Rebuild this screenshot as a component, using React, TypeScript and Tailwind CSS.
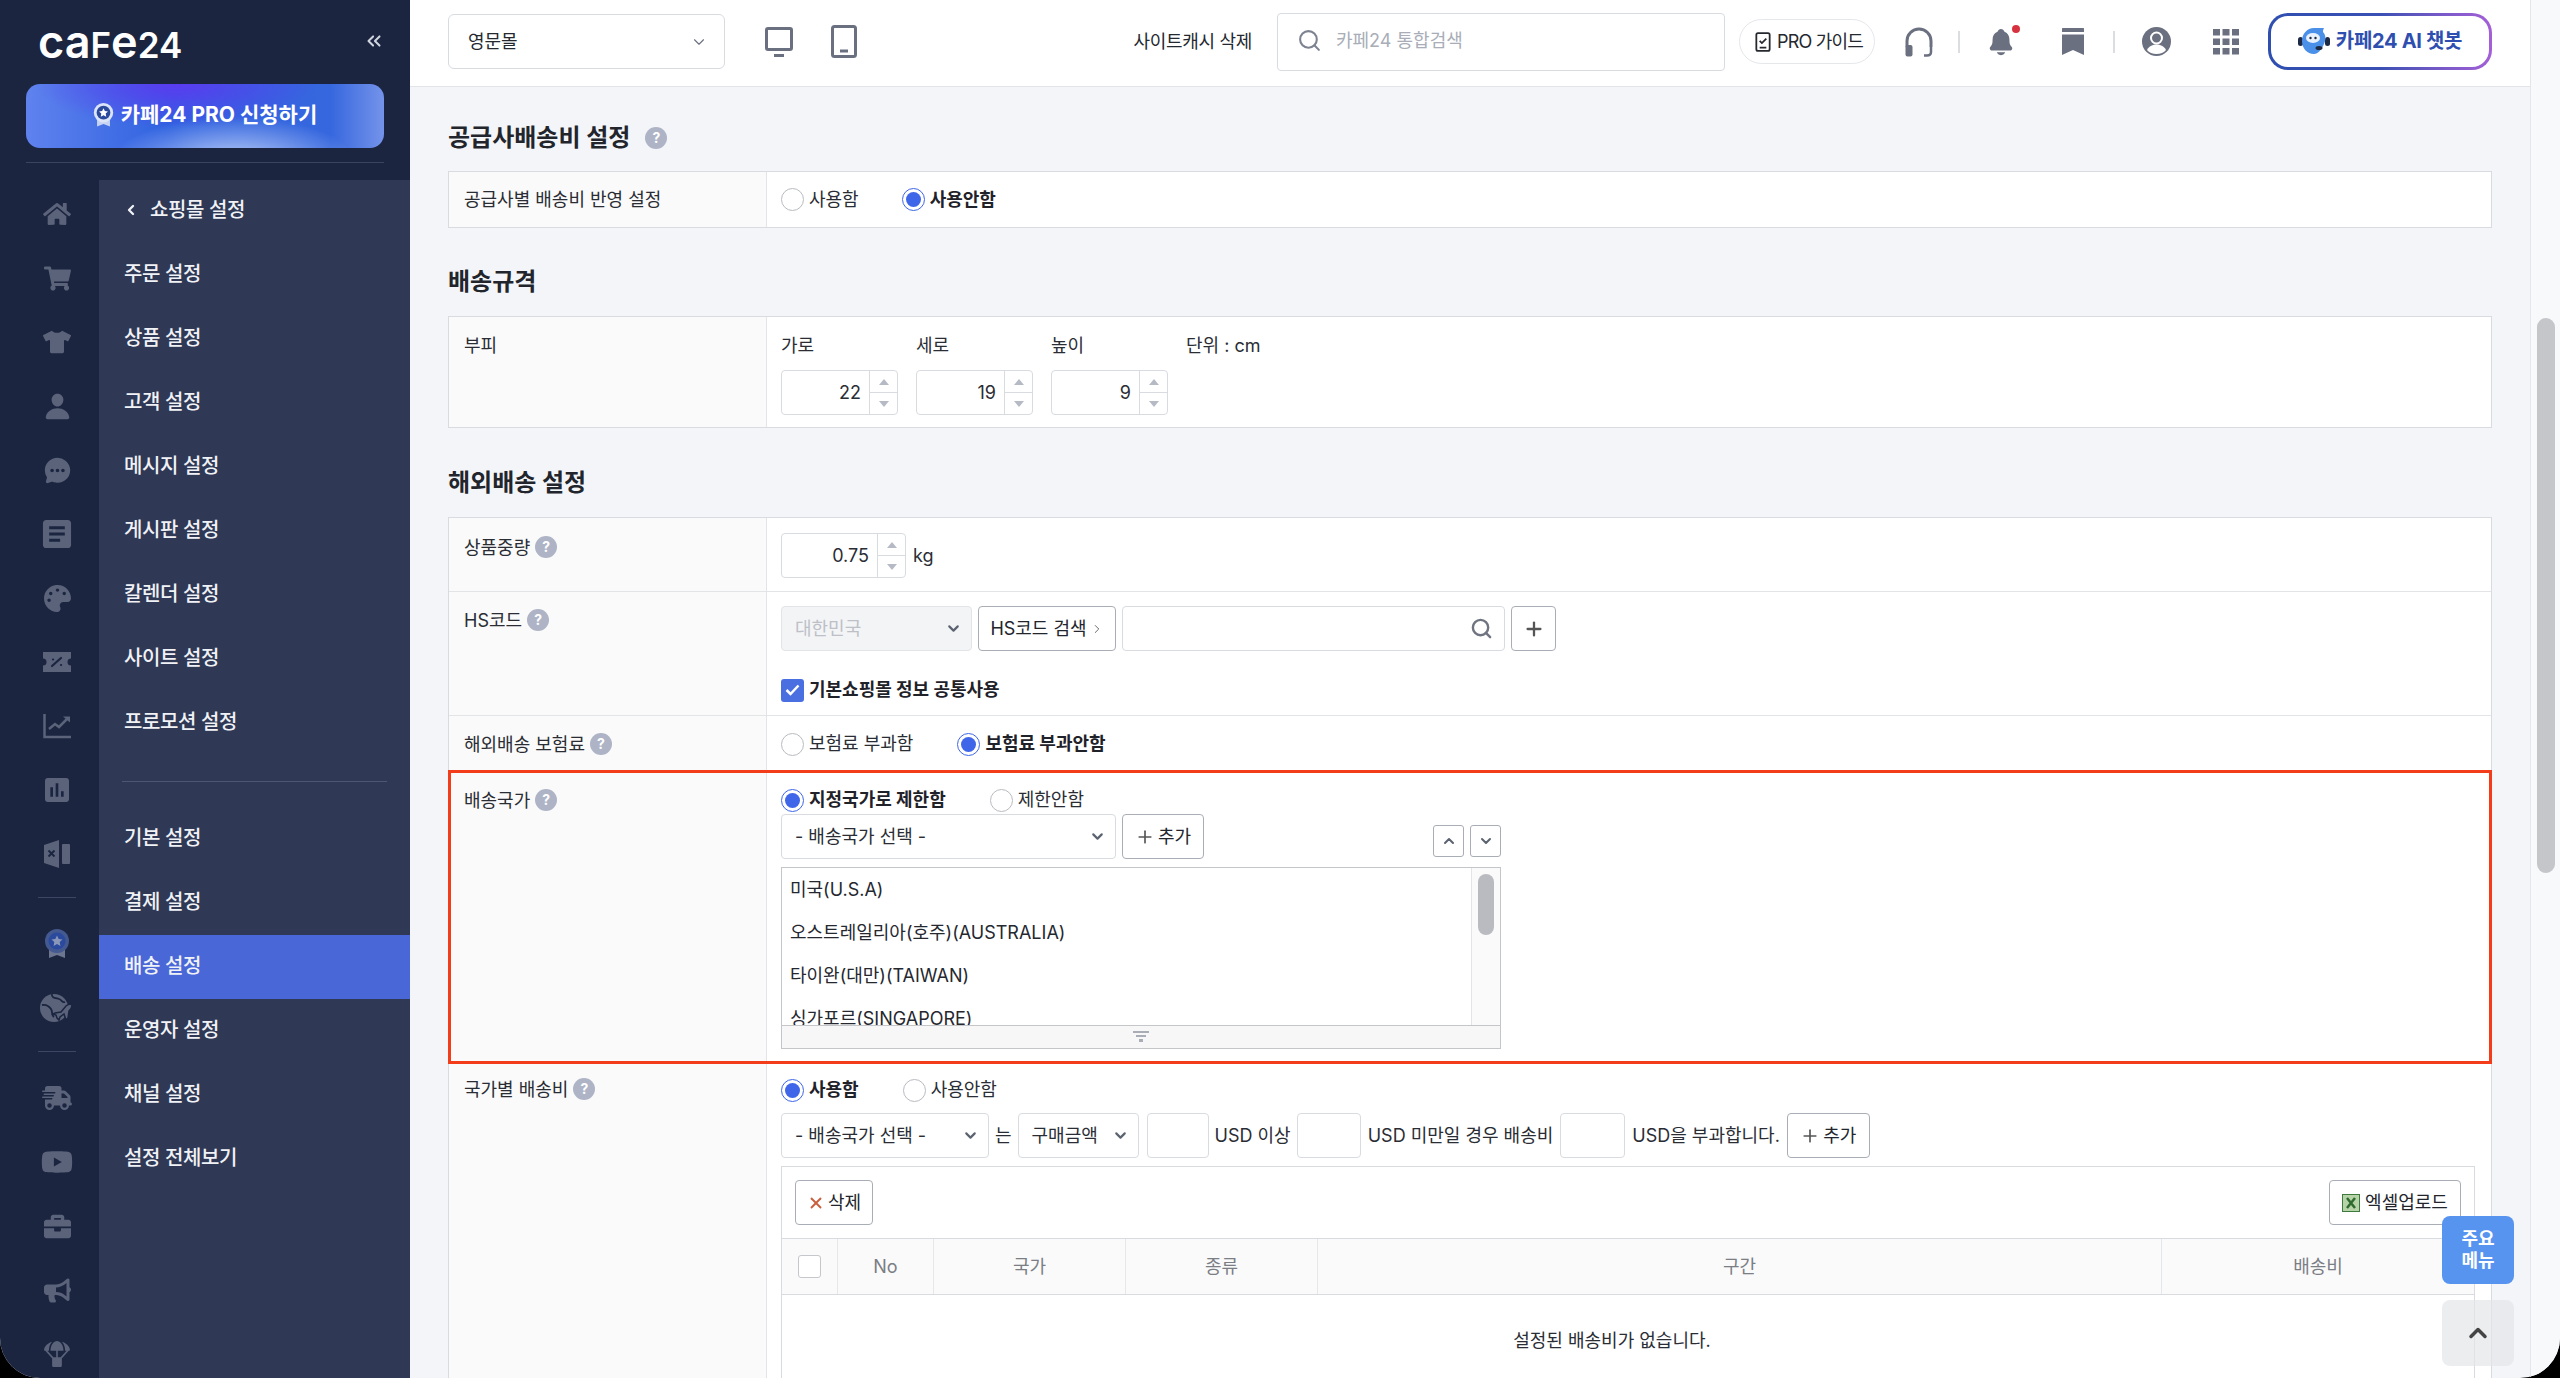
import { ChevronDown, ChevronLeft, ChevronRight, ChevronUp, ChevronsLeft, Plus, Search, X } from 'lucide-react';
import { FaHome, FaShoppingCart, FaTshirt, FaPalette, FaBriefcase, FaBullhorn, FaParachuteBox } from 'react-icons/fa';
import { FaTruckFast, FaYoutube } from 'react-icons/fa6';
import { IoChatbubbleEllipses, IoNotifications, IoPerson } from 'react-icons/io5';
import { MdArticle, MdInsertChart } from 'react-icons/md';
import type { ReactNode } from 'react';

const menuTop = ['주문 설정', '상품 설정', '고객 설정', '메시지 설정', '게시판 설정', '칼렌더 설정', '사이트 설정', '프로모션 설정'];
const menuBottom = ['기본 설정', '결제 설정', '배송 설정', '운영자 설정', '채널 설정', '설정 전체보기'];
const countries = ['미국(U.S.A)', '오스트레일리아(호주)(AUSTRALIA)', '타이완(대만)(TAIWAN)', '싱가포르(SINGAPORE)'];

function Coupon() {
  return (
    <svg width="28" height="20" viewBox="0 0 28 20" fill="currentColor">
      <path d="M0 0h28v6.500a3.500 3.500 0 0 0 0 7V20H0v-6.500a3.500 3.500 0 0 0 0-7z" />
      <path d="M9 14l9-8M10 7.500h.1M18 13h.1" stroke="#1b2540" strokeWidth="2.200" strokeLinecap="round" />
    </svg>
  );
}

function LineChart() {
  return (
    <svg width="28" height="26" viewBox="0 0 28 26" fill="none" stroke="currentColor" strokeWidth="2.500">
      <path d="M1.500 1v23H28" />
      <path d="M6 16l6-5 4 3 8-8" />
      <path d="M20 3.500h7v6z" fill="currentColor" stroke="none" />
    </svg>
  );
}

function BookX() {
  return (
    <svg width="26" height="28" viewBox="0 0 26 28" fill="currentColor">
      <path d="M0 5l15-5v28L0 23z" />
      <rect x="18" y="4" width="8" height="20" rx="1" />
      <path d="M4.500 10.500l6 6M10.500 10.500l-6 6" stroke="#1b2540" strokeWidth="1.800" />
    </svg>
  );
}

function Medal({ ring, star, ribbon, size = 26 }: { ring: string; star: string; ribbon: string; size?: number }) {
  return (
    <svg width={size} height={(size * 30) / 26} viewBox="0 0 26 30">
      <path d="M5 18v11l8-3 8 3V18z" fill={ribbon} />
      <circle cx="13" cy="12" r="12" fill={ring} />
      <circle cx="13" cy="12" r="8.500" fill="#2b4a9e" />
      <path d="M13 6.500l1.700 3.500 3.800.5-2.800 2.600.7 3.800-3.400-1.800-3.400 1.800.7-3.800-2.800-2.600 3.800-.5z" fill={star} />
    </svg>
  );
}

function GlobePlane() {
  return (
    <svg width="34" height="30" viewBox="0 0 34 30" fill="currentColor">
      <circle cx="14" cy="15" r="14" />
      <path d="M2 12c5-1 7 1 9 4s0 6 3 8M12 1c-1 4 4 4 7 5s3 4 6 3" fill="none" stroke="#1b2540" strokeWidth="1.800" />
      <path d="M15 20l6-1 5-6c2-2 6-2 6-1s-1 4-3 6l-1 7-2 2-2-6-4 3-1 3-2-2-1-3-3-1z" stroke="#1b2540" strokeWidth="1.500" />
    </svg>
  );
}

const railGroupOne = [
  <FaHome key="home" size={28} />,
  <FaShoppingCart key="cart" size={27} />,
  <FaTshirt key="shirt" size={28} />,
  <IoPerson key="person" size={29} />,
  <IoChatbubbleEllipses key="chat" size={29} />,
  <MdArticle key="board" size={30} className="scale-125" />,
  <FaPalette key="palette" size={27} />,
  <Coupon key="coupon" />,
  <LineChart key="chart" />,
  <MdInsertChart key="bar" size={32} />,
  <BookX key="book" />,
];

function RailIcon({ children }: { children: ReactNode }) {
  return <div className="h-[64px] flex items-center justify-center text-[#5a6379]">{children}</div>;
}

function Logo() {
  return (
    <span className="font-['Inter',sans-serif] font-semibold leading-none text-white whitespace-nowrap">
      <span className="text-[45px]">ca</span>
      <span className="text-[35px] uppercase">f</span>
      <span className="text-[45px]">e</span>
      <span className="text-[35px]">24</span>
    </span>
  );
}

function Sidebar() {
  return (
    <aside className="w-[410px] shrink-0 h-full bg-[#1b2540] flex flex-col overflow-hidden">
      <div className="h-[84px] shrink-0 flex items-center justify-between pl-[38px] pr-[25px] pb-[2px]">
        <Logo />
        <ChevronsLeft size={22} className="text-[#d0d4de]" strokeWidth={2.200} />
      </div>
      <div className="mx-[26px] h-[64px] shrink-0 rounded-[14px] flex items-center justify-center gap-[7px] pb-[2px] bg-[radial-gradient(ellipse_at_42%_0%,#5a3bf0_0%,transparent_48%),radial-gradient(ellipse_at_58%_125%,#c1d2f7_0%,transparent_42%),linear-gradient(90deg,#5f82ee,#2f62e0_40%,#3667de_85%,#7493ea)]">
        <Medal ring="#dce4f8" star="#ffffff" ribbon="#c5d2f2" size={21} />
        <span className="text-white font-bold text-[21px]">카페24 PRO 신청하기</span>
      </div>
      <div className="mx-[26px] mt-[14px] h-px shrink-0 bg-[#3a4460]" />
      <div className="flex-1 min-h-0 flex mt-[17px]">
        <div className="w-[99px] shrink-0 pt-[2px] pl-[15px]">
          {railGroupOne.map((icon) => (
            <RailIcon key={icon.key}>{icon}</RailIcon>
          ))}
          <div className="mx-[23px] mt-[11px] mb-[14px] h-px bg-[#3d4763]" />
          <RailIcon>
            <Medal ring="#43598f" star="#8b97b8" ribbon="#6d7690" />
          </RailIcon>
          <RailIcon>
            <GlobePlane />
          </RailIcon>
          <div className="mx-[23px] mt-[11px] mb-[14px] h-px bg-[#3d4763]" />
          <RailIcon>
            <FaTruckFast size={30} />
          </RailIcon>
          <RailIcon>
            <FaYoutube size={32} />
          </RailIcon>
          <RailIcon>
            <FaBriefcase size={27} />
          </RailIcon>
          <RailIcon>
            <FaBullhorn size={27} />
          </RailIcon>
          <RailIcon>
            <FaParachuteBox size={26} />
          </RailIcon>
        </div>
        <nav className="flex-1 bg-[#2f3855] text-[#f0f2f6] text-[20px] font-medium tracking-[-0.4px]">
          <div className="h-[63px] flex items-center pl-[24px] pb-[3px] gap-[11px]">
            <ChevronLeft size={16} strokeWidth={3.500} />
            <span>쇼핑몰 설정</span>
          </div>
          {menuTop.map((m) => (
            <div key={m} className="h-[64px] flex items-center pl-[25px] pb-[2px]">{m}</div>
          ))}
          <div className="ml-[23px] mr-[23px] mt-[26px] mb-[25px] h-px bg-[#4d5672]" />
          {menuBottom.map((m) => (
            <div key={m} className={m === '배송 설정' ? 'h-[64px] flex items-center pl-[25px] pb-[2px] bg-[#4a67d8]' : 'h-[64px] flex items-center pl-[25px] pb-[2px]'}>{m}</div>
          ))}
        </nav>
      </div>
    </aside>
  );
}

function Monitor() {
  return (
    <svg width="28" height="30" viewBox="0 0 28 30" fill="none" stroke="#6b7080" strokeWidth="3">
      <rect x="1.500" y="1.500" width="25" height="21" rx="1.500" />
      <path d="M9 28.500h10" />
    </svg>
  );
}

function Phone() {
  return (
    <svg width="26" height="33" viewBox="0 0 26 33" fill="none" stroke="#6b7080" strokeWidth="3">
      <rect x="1.500" y="1.500" width="23" height="30" rx="2" />
      <path d="M9 26h8" />
    </svg>
  );
}

function Headset() {
  return (
    <svg width="28" height="30" viewBox="0 0 28 30" fill="none" stroke="#6b7080" strokeWidth="3">
      <path d="M2 20v-6a12 12 0 0 1 24 0v6" />
      <rect x="0.500" y="18" width="7" height="11.500" rx="2" fill="#6b7080" stroke="none" />
      <path d="M26 20v5c0 3-2 3.500-4 3.500h-3" strokeWidth="2.500" />
    </svg>
  );
}

function BookmarkIcon() {
  return (
    <svg width="22" height="27" viewBox="0 0 22 27" fill="#6b7080">
      <rect x="0" y="0" width="22" height="4" rx="0.500" />
      <path d="M0 6.500h22V27l-11-5-11 5z" />
    </svg>
  );
}

function Account() {
  return (
    <svg width="29" height="29" viewBox="0 0 29 29">
      <circle cx="14.500" cy="14.500" r="14.500" fill="#6b7080" />
      <circle cx="14.500" cy="11" r="5.500" fill="#6b7080" stroke="#ffffff" strokeWidth="2" />
      <path d="M5 23c2-4 6-5.500 9.500-5.500S22 19 24 23c-2 2.500-5.500 4-9.500 4S7 25.500 5 23z" fill="#ffffff" />
    </svg>
  );
}

function AppsGrid() {
  const cells = [0, 1, 2];
  return (
    <svg width="26" height="26" viewBox="0 0 26 26" fill="#6b7080">
      {cells.map((r) =>
        cells.map((c) => <rect key={`${r}${c}`} x={c * 9.500} y={r * 9.500} width="7" height="6.500" />),
      )}
    </svg>
  );
}

function BotFace() {
  return (
    <svg width="32" height="28" viewBox="0 0 32 28">
      <rect x="0" y="10" width="5" height="9" rx="2.500" fill="#1e2a44" />
      <rect x="27" y="10" width="5" height="9" rx="2.500" fill="#1e2a44" />
      <path d="M16 1h10c-1 2-1 3-1 4 3 3 3 8 1 12-2 5-6 10-10 10C9 27 4 21 4 14 4 7 9 1 16 1z" fill="#4a90e8" />
      <ellipse cx="15" cy="11" rx="7" ry="5" fill="#e8f1fd" />
      <circle cx="12.500" cy="11" r="1.200" fill="#1e2a44" />
      <circle cx="17.500" cy="11" r="1.200" fill="#1e2a44" />
      <ellipse cx="21" cy="21" rx="3.500" ry="2" fill="#1e2a44" />
    </svg>
  );
}

function Header() {
  return (
    <header className="h-[87px] shrink-0 bg-white border-b border-[#e2e4e8] flex items-center pl-[38px] pr-[38px] pb-[3px]">
      <div className="w-[277px] h-[55px] border border-[#d8dbe0] rounded-[6px] flex items-center justify-between pl-[19px] pr-[16px] text-[18px] text-[#25282f]">
        <span>영문몰</span>
        <ChevronDown size={18} className="text-[#6b7080]" strokeWidth={1.500} />
      </div>
      <div className="ml-[40px]"><Monitor /></div>
      <div className="ml-[38px]"><Phone /></div>
      <span className="ml-auto text-[18px] text-[#25282f] tracking-[-0.3px]">사이트캐시 삭제</span>
      <div className="ml-[25px] w-[448px] h-[58px] border border-[#d8dbe0] rounded-[4px] flex items-center gap-[14px] pl-[19px] pb-[3px]">
        <Search size={25} className="text-[#7c8290]" strokeWidth={2} />
        <span className="text-[18px] text-[#a8adb8]">카페24 통합검색</span>
      </div>
      <div className="ml-[14px] w-[136px] h-[45px] border border-[#e5e7eb] rounded-full flex items-center justify-center gap-[6px] pl-[4px] text-[18px] text-[#25282f] tracking-[-0.8px]">
        <svg width="16" height="20" viewBox="0 0 14 18" fill="none" stroke="#25282f" strokeWidth="1.600">
          <rect x="1" y="1" width="12" height="16" rx="1.500" />
          <path d="M4 8l2 2 4-4M4 14h6" />
        </svg>
        <span>PRO 가이드</span>
      </div>
      <div className="ml-[30px]"><Headset /></div>
      <div className="ml-[25px] w-[2px] h-[22px] bg-[#dcdde1]" />
      <div className="ml-[26px] relative">
        <IoNotifications size={30} className="text-[#6b7080]" />
        <span className="absolute -top-[2px] right-[-4px] w-[8px] h-[8px] rounded-full bg-[#d7323f]" />
      </div>
      <div className="ml-[46px]"><BookmarkIcon /></div>
      <div className="ml-[29px] w-[2px] h-[22px] bg-[#dcdde1]" />
      <div className="ml-[27px]"><Account /></div>
      <div className="ml-[42px]"><AppsGrid /></div>
      <div className="ml-[29px] w-[224px] h-[57px] rounded-[20px] p-[3px] bg-linear-to-r from-[#2f4fb0] via-[#3a50b4] to-[#a45fd8]">
        <div className="w-full h-full rounded-[17px] bg-white flex items-center justify-center gap-[6px] pb-[2px]">
          <BotFace />
          <span className="text-[20px] font-bold text-[#2f4fb0] tracking-[-0.3px]">카페24 AI 챗봇</span>
        </div>
      </div>
    </header>
  );
}

function Help() {
  return <span className="inline-flex w-[22px] h-[22px] rounded-full bg-[#aeb4c6] text-white text-[14px] font-bold items-center justify-center leading-none">?</span>;
}

function Title({ children }: { children: ReactNode }) {
  return <h2 className="h-[32px] flex items-center gap-[15px] text-[24px] font-bold text-[#22252c]">{children}</h2>;
}

function Radio({ label, checked }: { label: string; checked?: boolean }) {
  return (
    <span className={checked ? 'flex items-center gap-[5px] font-bold text-[#1f2229]' : 'flex items-center gap-[5px]'}>
      {checked ? (
        <span className="w-[23px] h-[23px] rounded-full border-[1.500px] border-[#3f66e8] bg-white flex items-center justify-center">
          <span className="w-[15px] h-[15px] rounded-full bg-[#3f66e8]" />
        </span>
      ) : (
        <span className="w-[23px] h-[23px] rounded-full border-[1.500px] border-[#b9bbc0] bg-white" />
      )}
      {label}
    </span>
  );
}

function Field({ w, children }: { w: string; children?: ReactNode }) {
  return <div className={`${w} h-[45px] shrink-0 border border-[#d8dbe0] rounded-[4px] bg-white flex items-center`}>{children}</div>;
}

function Spin({ value, w }: { value: string; w: string }) {
  return (
    <div className={`${w} h-[45px] shrink-0 border border-[#d8dbe0] rounded-[4px] bg-white flex items-stretch`}>
      <div className="flex-1 flex items-center justify-end pr-[8px] text-[18px]">{value}</div>
      <div className="w-[28px] border-l border-[#d8dbe0] flex flex-col">
        <div className="flex-1 flex items-center justify-center border-b border-[#d8dbe0]">
          <span className="w-0 h-0 border-x-[5px] border-x-transparent border-b-[6px] border-b-[#b6bac4]" />
        </div>
        <div className="flex-1 flex items-center justify-center">
          <span className="w-0 h-0 border-x-[5px] border-x-transparent border-t-[6px] border-t-[#b6bac4]" />
        </div>
      </div>
    </div>
  );
}

function SelectBox({ label, w, muted }: { label: string; w: string; muted?: boolean }) {
  return (
    <div className={muted ? `${w} h-[45px] shrink-0 border border-[#e2e4e8] rounded-[4px] bg-[#f3f4f6] flex items-center justify-between pl-[13px] pr-[9px] text-[#bdc0c7]` : `${w} h-[45px] shrink-0 border border-[#d8dbe0] rounded-[4px] bg-white flex items-center justify-between pl-[13px] pr-[9px]`}>
      <span>{label}</span>
      <ChevronDown size={17} strokeWidth={3} className="text-[#5b6270]" />
    </div>
  );
}

function Btn({ w, children }: { w: string; children: ReactNode }) {
  return <div className={`${w} h-[45px] shrink-0 border border-[#a9adb5] rounded-[4px] bg-white flex items-center justify-center gap-[3px] text-[#22252c]`}>{children}</div>;
}

function Row({ label, className, pad, labelPad, children }: { label: ReactNode; className: string; pad: string; labelPad: string; children: ReactNode }) {
  return (
    <div className={`flex ${className}`}>
      <div className={`w-[318px] shrink-0 bg-[#fafafa] border-r border-[#e2e4e8] pl-[15px] ${labelPad} flex items-start gap-[5px]`}>{label}</div>
      <div className={`flex-1 min-w-0 pl-[14px] ${pad}`}>{children}</div>
    </div>
  );
}

function Content() {
  return (
    <div className="flex-1 min-h-0 overflow-hidden pl-[38px] pr-[38px] pt-[35px] text-[18px] leading-[24px] text-[#2a2d34]">
      <div className="mb-[17px]">
        <Title>
          공급사배송비 설정 <Help />
        </Title>
      </div>
      <section className="border border-[#d8dbe0] bg-white h-[57px] flex">
        <div className="w-[318px] shrink-0 bg-[#fafafa] border-r border-[#e2e4e8] pl-[15px] flex items-center">공급사별 배송비 반영 설정</div>
        <div className="pl-[14px] flex items-center gap-[43px]">
          <Radio label="사용함" />
          <Radio label="사용안함" checked />
        </div>
      </section>

      <div className="mt-[38px] mb-[18px]">
        <Title>배송규격</Title>
      </div>
      <section className="border border-[#d8dbe0] bg-white h-[112px] flex">
        <div className="w-[318px] shrink-0 bg-[#fafafa] border-r border-[#e2e4e8] pl-[15px] pt-[17px]">부피</div>
        <div className="pl-[14px] pt-[17px] flex gap-[18px]">
          <div className="w-[117px]">
            <div className="mb-[12px]">가로</div>
            <Spin value="22" w="w-[117px]" />
          </div>
          <div className="w-[117px]">
            <div className="mb-[12px]">세로</div>
            <Spin value="19" w="w-[117px]" />
          </div>
          <div className="w-[117px]">
            <div className="mb-[12px]">높이</div>
            <Spin value="9" w="w-[117px]" />
          </div>
          <div>단위 : cm</div>
        </div>
      </section>

      <div className="mt-[39px] mb-[18px]">
        <Title>해외배송 설정</Title>
      </div>
      <section className="border-x border-t border-[#d8dbe0] bg-white">
        <Row className="h-[74px] border-b border-[#e2e4e8]" pad="pt-[15px]" labelPad="pt-[18px]" label={<>상품중량 <Help /></>}>
          <div className="flex items-center gap-[7px]">
            <Spin value="0.75" w="w-[125px]" />
            <span>kg</span>
          </div>
        </Row>
        <Row className="h-[124px] border-b border-[#e2e4e8]" pad="pt-[14px]" labelPad="pt-[17px]" label={<>HS코드 <Help /></>}>
          <div className="flex items-center gap-[6px]">
            <SelectBox label="대한민국" w="w-[191px]" muted />
            <Btn w="w-[138px]">
              HS코드 검색 <ChevronRight size={14} strokeWidth={1.500} className="text-[#555]" />
            </Btn>
            <Field w="w-[383px] justify-end pr-[11px]">
              <Search size={23} strokeWidth={2.500} className="text-[#6f7480]" />
            </Field>
            <Btn w="w-[45px]">
              <Plus size={22} strokeWidth={2.500} className="text-[#555]" />
            </Btn>
          </div>
          <div className="mt-[27px] flex items-center gap-[5px] font-bold text-[#1f2229]">
            <span className="w-[23px] h-[23px] rounded-[3px] bg-[#4a6fe0] flex items-center justify-center">
              <svg width="15" height="12" viewBox="0 0 15 12" fill="none" stroke="#fff" strokeWidth="2.500"><path d="M1.500 6l4 4 8-8.500" /></svg>
            </span>
            기본쇼핑몰 정보 공통사용
          </div>
        </Row>
        <Row className="h-[56px] border-b border-[#e2e4e8]" pad="pt-[16px]" labelPad="pt-[17px]" label={<>해외배송 보험료 <Help /></>}>
          <div className="flex items-center gap-[44px]">
            <Radio label="보험료 부과함" />
            <Radio label="보험료 부과안함" checked />
          </div>
        </Row>
        <div className="relative">
          <Row className="h-[291px] border-b border-[#e2e4e8]" pad="pt-[16px]" labelPad="pt-[17px]" label={<>배송국가 <Help /></>}>
            <div className="flex items-center gap-[44px]">
              <Radio label="지정국가로 제한함" checked />
              <Radio label="제한안함" />
            </div>
            <div className="w-[720px] mt-[2px] flex items-end gap-[6px]">
              <SelectBox label="- 배송국가 선택 -" w="w-[335px]" />
              <Btn w="w-[82px]">
                <Plus size={20} strokeWidth={2} className="text-[#555]" />
                추가
              </Btn>
              <div className="ml-auto flex gap-[6px] pb-[2px]">
                <div className="w-[31px] h-[32px] border border-[#a9adb5] rounded-[3px] flex items-center justify-center">
                  <ChevronUp size={16} strokeWidth={3} className="text-[#5b6270]" />
                </div>
                <div className="w-[31px] h-[32px] border border-[#a9adb5] rounded-[3px] flex items-center justify-center">
                  <ChevronDown size={16} strokeWidth={3} className="text-[#5b6270]" />
                </div>
              </div>
            </div>
            <div className="w-[720px] h-[182px] mt-[8px] border border-[#c4c6ca] flex flex-col">
              <div className="flex-1 min-h-0 flex overflow-hidden">
                <div className="flex-1 pl-[8px] text-[#25282f]">
                  {countries.map((c) => (
                    <div key={c} className="h-[43px] flex items-center">{c}</div>
                  ))}
                </div>
                <div className="w-[29px] border-l border-[#e2e4e8] bg-[#fafafa] pt-[6px] pl-[6px]">
                  <div className="w-[16px] h-[61px] rounded-full bg-[#b9bbc0]" />
                </div>
              </div>
              <div className="h-[23px] bg-[#f7f7f7] border-t border-[#c4c6ca] flex items-center justify-center">
                <svg width="16" height="12" viewBox="0 0 16 12" fill="#a9adb5"><rect width="16" height="2" /><rect x="3" y="4" width="10" height="2" /><rect x="6" y="8" width="4" height="3" /></svg>
              </div>
            </div>
          </Row>
          <div className="absolute -left-px right-[-1px] -top-[2px] bottom-[-1px] border-[3px] border-[#f23c1a] pointer-events-none" />
        </div>
        <Row className="h-[400px]" pad="pt-[15px]" labelPad="pt-[15px]" label={<>국가별 배송비 <Help /></>}>
          <div className="flex items-center gap-[44px]">
            <Radio label="사용함" checked />
            <Radio label="사용안함" />
          </div>
          <div className="mt-[11px] flex items-center">
            <SelectBox label="- 배송국가 선택 -" w="w-[208px]" />
            <span className="mx-[6px]">는</span>
            <SelectBox label="구매금액" w="w-[121px]" />
            <div className="ml-[8px]"><Field w="w-[62px]" /></div>
            <span className="mx-[6px]">USD 이상</span>
            <Field w="w-[64px]" />
            <span className="mx-[7px]">USD 미만일 경우 배송비</span>
            <Field w="w-[65px]" />
            <span className="mx-[7px]">USD을 부과합니다.</span>
            <Btn w="w-[83px]">
              <Plus size={20} strokeWidth={2} className="text-[#555]" />
              추가
            </Btn>
          </div>
          <div className="mt-[8px] mr-[16px] border border-[#d8dbe0] h-[300px]">
            <div className="h-[72px] border-b border-[#d8dbe0] px-[13px] pt-[13px] flex justify-between">
              <Btn w="w-[78px]">
                <X size={18} strokeWidth={2.500} className="text-[#c9603f]" />
                삭제
              </Btn>
              <Btn w="w-[132px]">
                <svg width="18" height="18" viewBox="0 0 18 18"><rect x="0.500" y="0.500" width="17" height="17" fill="#b7d3a8" stroke="#3d7a3d" /><path d="M5 4l8 10M13 4L5 14" stroke="#2f6b2f" strokeWidth="2.500" /></svg>
                <span className="ml-[2px]">엑셀업로드</span>
              </Btn>
            </div>
            <div className="h-[56px] bg-[#fafafa] border-b border-[#d8dbe0] flex text-[#7b7e85] [&>div]:flex [&>div]:items-center [&>div]:justify-center">
              <div className="w-[56px] border-r border-[#e6e7ea]">
                <span className="w-[23px] h-[23px] rounded-[3px] border-[1.500px] border-[#c5c7cc] bg-white" />
              </div>
              <div className="w-[96px] border-r border-[#e6e7ea]">No</div>
              <div className="w-[192px] border-r border-[#e6e7ea]">국가</div>
              <div className="w-[192px] border-r border-[#e6e7ea]">종류</div>
              <div className="w-[844px] border-r border-[#e6e7ea]">구간</div>
              <div className="flex-1">배송비</div>
            </div>
            <div className="pt-[34px] pr-[32px] text-center text-[#2a2d34]">설정된 배송비가 없습니다.</div>
          </div>
        </Row>
      </section>
    </div>
  );
}

export default function App() {
  return (
    <div className="w-[2560px] h-[1378px] bg-black overflow-hidden font-['Inter','Noto_Sans_CJK_KR',sans-serif]">
      <div className="relative w-full h-full rounded-b-[40px] overflow-hidden flex bg-[#f3f5f9]">
        <Sidebar />
        <main className="flex-1 min-w-0 flex flex-col">
          <Header />
          <Content />
        </main>
        <div className="w-[30px] shrink-0 bg-[#f8f9fb] border-l border-[#e4e6ea] pt-[318px] pl-[6px]">
          <div className="w-[18px] h-[555px] rounded-full bg-[#c4c6ca]" />
        </div>
        <div className="absolute left-[2442px] top-[1216px] w-[72px] h-[68px] rounded-[8px] bg-[#5794f0] text-white font-bold text-[18px] leading-[22px] flex items-center justify-center text-center">
          주요
          <br />
          메뉴
        </div>
        <div className="absolute left-[2442px] top-[1300px] w-[72px] h-[66px] rounded-[8px] bg-[#e4e5e8]/70 flex items-center justify-center">
          <ChevronUp size={28} strokeWidth={3} className="text-[#444]" />
        </div>
      </div>
    </div>
  );
}
